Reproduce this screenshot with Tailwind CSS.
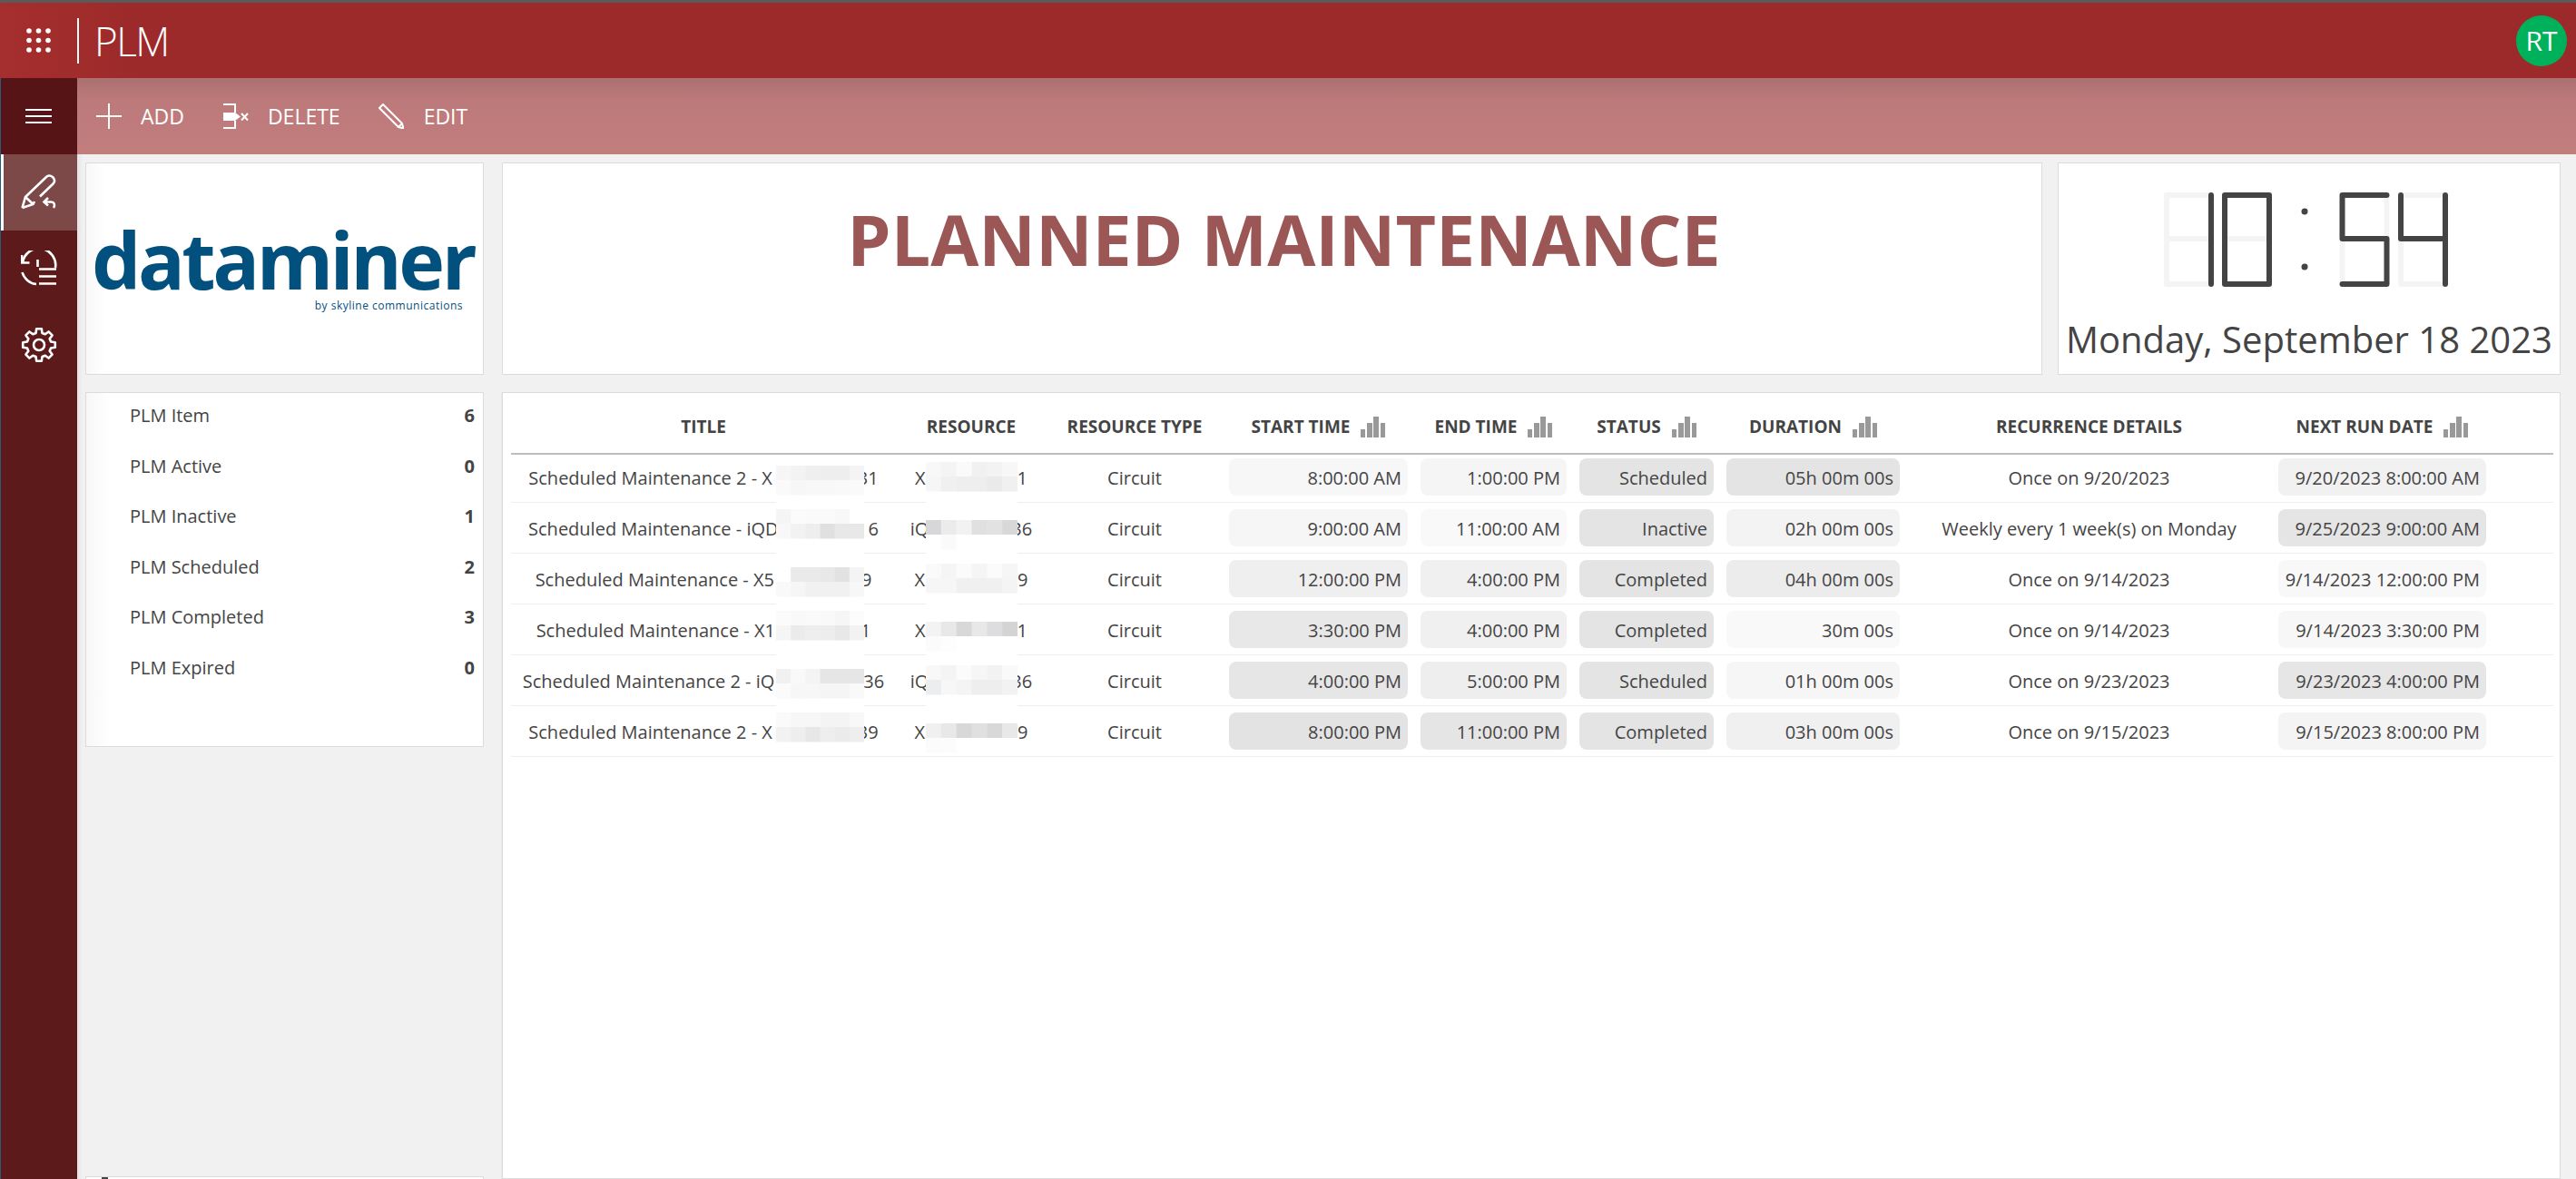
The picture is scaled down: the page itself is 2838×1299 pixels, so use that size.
<!DOCTYPE html>
<html lang="en">

<head>
    <meta charset="UTF-8">
    <title>PLM</title>
    <script src="https://cdn.jsdelivr.net/npm/@tailwindcss/browser@4"></script>
</head>

<body class="h-[1299px] overflow-hidden bg-[#f1f1f1] font-['Open_Sans',sans-serif] text-[#444444]">
    <svg class="hidden">
        <symbol id="bars" viewBox="0 0 27 23">
            <rect x="0" y="14" width="5" height="9" fill="#999999" />
            <rect x="7" y="7" width="6" height="16" fill="#999999" />
            <rect x="14" y="0" width="6" height="23" fill="#999999" />
            <rect x="22" y="7" width="5" height="16" fill="#999999" />
        </symbol>
        <symbol id="ghost" viewBox="0 0 55 104">
            <path d="M3 3H52V101H3ZM3 51H52" fill="none" stroke="#f4f4f4" stroke-width="6" stroke-linecap="round" />
        </symbol>
    </svg>

    <!-- top bar -->
    <div class="h-[3px] bg-[#5a5a5a]"></div>
    <header class="flex h-[83px] items-center bg-linear-to-r from-[#a52e2e] to-[#9c2a2a] to-[6%] pr-[10px] pl-[29px] text-white">
        <svg width="27" height="27" viewBox="0 0 27 27" fill="#ffffff">
            <circle cx="3" cy="3" r="2.8" /><circle cx="13.5" cy="3" r="2.8" /><circle cx="24" cy="3" r="2.8" />
            <circle cx="3" cy="13.5" r="2.8" /><circle cx="13.5" cy="13.5" r="2.8" /><circle cx="24" cy="13.5" r="2.8" />
            <circle cx="3" cy="24" r="2.8" /><circle cx="13.5" cy="24" r="2.8" /><circle cx="24" cy="24" r="2.8" />
        </svg>
        <div class="ml-[29px] h-[50px] w-[2px] bg-white"></div>
        <div class="ml-[17px] text-[44px] leading-none font-light tracking-[-1.5px]">PLM</div>
        <div class="ml-auto flex size-[56px] items-center justify-center rounded-full bg-[#00b15c] text-[30px] font-medium">RT</div>
    </header>

    <div class="flex h-[1213px]">
        <!-- side nav -->
        <nav class="w-[85px] shrink-0 border-l border-[#2d5a78] bg-[#5c1a1a]">
            <div class="flex h-[84px] items-center justify-center bg-[#561416] pr-[1px]">
                <div class="flex w-[29px] flex-col gap-[5px]">
                    <div class="h-[2px] bg-white"></div>
                    <div class="h-[2px] bg-white"></div>
                    <div class="h-[2px] bg-white"></div>
                </div>
            </div>
            <div class="flex h-[84px] items-center justify-center border-l-[3px] border-white bg-[#7d4848] pr-[3px]">
                <svg width="40" height="40" viewBox="0 0 40 40" fill="none" stroke="#ffffff" stroke-width="2.6">
                    <path d="M1.5 37L5 25L28 3C30 1 33 1 35.5 3.5C37.5 6 37.5 8.500 35.500 10.500L21 24.500M15 30L13.500 33L1.500 37M5 25L13.500 33" />
                    <path d="M30 26L25.500 30.500L30 34.500M25.500 30.500H33C37 30.500 38 34 36 37" />
                </svg>
            </div>
            <div class="flex h-[84px] items-center justify-center pr-[1px]">
                <svg width="40" height="40" viewBox="0 0 40 40" fill="none" stroke="#ffffff" stroke-width="2.6">
                    <path d="M1 5V13.500H9.500M2 13A18 18 0 0 1 38 19M1.500 24A18 18 0 0 0 17 37M18.500 10V18M20 20.500H39M20 28.500H39M20 36.500H39" />
                </svg>
            </div>
            <div class="flex h-[84px] items-center justify-center pr-[1px]">
                <svg width="40" height="40" viewBox="0 0 40 40" fill="none" stroke="#ffffff" stroke-width="2.6" stroke-linejoin="round">
                    <polygon points="16.51,6.96 17.18,2.22 22.82,2.22 23.49,6.96 26.75,8.31 30.58,5.44 34.56,9.42 31.69,13.25 33.04,16.51 37.78,17.18 37.78,22.82 33.04,23.49 31.69,26.75 34.56,30.58 30.58,34.56 26.75,31.69 23.49,33.04 22.82,37.78 17.18,37.78 16.51,33.04 13.25,31.69 9.42,34.56 5.44,30.58 8.31,26.75 6.96,23.49 2.22,22.82 2.22,17.18 6.96,16.51 8.31,13.25 5.44,9.42 9.42,5.44 13.25,8.31" />
                    <circle cx="20" cy="20" r="6" />
                </svg>
            </div>
        </nav>

        <div class="flex min-w-0 flex-1 flex-col">
            <!-- toolbar -->
            <div class="flex h-[84px] shrink-0 items-center gap-[42px] bg-linear-to-b from-[#ab7070] via-[#bd7a7a] via-30% to-[#c27d7d] pl-[21px] text-[23px] text-white">
                <div class="flex items-center gap-[21px]">
                    <svg width="28" height="28" viewBox="0 0 28 28" stroke="#ffffff" stroke-width="2">
                        <path d="M0 14H28M14 0V28" />
                    </svg>
                    <span>ADD</span>
                </div>
                <div class="flex items-center gap-[21px]">
                    <svg width="29" height="28" viewBox="0 0 29 28" fill="none" stroke="#ffffff" stroke-width="2">
                        <path d="M1 1H14V10M14 19V27H1M21 11L28 18.500M28 11L21 18.500" />
                        <path d="M1 10H14L20 14.500L14 19H1Z" fill="#ffffff" stroke="none" />
                    </svg>
                    <span>DELETE</span>
                </div>
                <div class="flex items-center gap-[22px]">
                    <svg width="28" height="28" viewBox="0 0 28 28" fill="none" stroke="#ffffff" stroke-width="2">
                        <path d="M1 5L5 1L26 22L27.500 27.500L22 26ZM22 26L26 22" />
                    </svg>
                    <span>EDIT</span>
                </div>
            </div>

            <!-- dashboard -->
            <main class="flex min-h-0 flex-1 flex-col bg-linear-to-r from-[#e4e4e4] to-[#f1f1f1] to-[6px] pt-[9px] pl-[9px]">
                <div class="flex h-[234px] shrink-0">
                    <div class="flex w-[439px] flex-col border border-[#dcdcdc] bg-linear-to-r from-[#f8f8f8] to-white to-[5%] pt-[65px]">
                        <div class="pl-[6px] text-[86px] leading-[82px] font-bold tracking-[-3.5px] text-[#02507e]">dataminer</div>
                        <div class="pr-[22px] text-right text-[12px] leading-[20px] tracking-[0.5px] text-[#02507e]">by skyline communications</div>
                    </div>
                    <div class="ml-[20px] w-[1697px] border border-[#dcdcdc] bg-white pt-[29px] pl-[26px] text-center text-[77px] leading-[110px] font-bold text-[#9b5656]">PLANNED MAINTENANCE</div>
                    <div class="ml-[17px] flex w-[554px] flex-col items-center border border-[#dcdcdc] bg-white pt-[32px]">
                        <svg class="-ml-[7px]" width="313" height="104" viewBox="0 0 313 104" fill="none" stroke="#444444" stroke-width="6" stroke-linecap="round" stroke-linejoin="round">
                            <use href="#ghost" x="0" y="0" width="55" height="104" />
                            <use href="#ghost" x="64" y="0" width="55" height="104" />
                            <use href="#ghost" x="193.500" y="0" width="55" height="104" />
                            <use href="#ghost" x="258" y="0" width="55" height="104" />
                            <path d="M52 3V101" />
                            <path d="M67 3H116V101H67Z" />
                            <circle cx="155" cy="21" r="3.500" fill="#444444" stroke="none" />
                            <circle cx="155" cy="82" r="3.500" fill="#444444" stroke="none" />
                            <path d="M245.500 3H196.500V51H245.500V101H196.500" />
                            <path d="M261 3V51H310M310 3V101" />
                        </svg>
                        <div class="mt-[28px] text-[40px] leading-[60px] whitespace-nowrap">Monday, September 18 2023</div>
                    </div>
                </div>

                <div class="mt-[19px] flex min-h-0 flex-1">
                    <!-- counters -->
                    <div class="flex w-[459px] shrink-0 flex-col border-r border-[#e9e9e9] pr-[9px]">
                        <div class="h-[391px] w-[439px] shrink-0 border border-[#dcdcdc] bg-linear-to-r from-[#f7f7f7] to-white to-[6%] pt-[5px] pr-[9px] pl-[48px] text-[20px]">
                            <div class="flex h-[55.5px] justify-between leading-[40px]"><span>PLM Item</span><b>6</b></div>
                            <div class="flex h-[55.5px] justify-between leading-[40px]"><span>PLM Active</span><b>0</b></div>
                            <div class="flex h-[55.5px] justify-between leading-[40px]"><span>PLM Inactive</span><b>1</b></div>
                            <div class="flex h-[55.5px] justify-between leading-[40px]"><span>PLM Scheduled</span><b>2</b></div>
                            <div class="flex h-[55.5px] justify-between leading-[40px]"><span>PLM Completed</span><b>3</b></div>
                            <div class="flex h-[55.5px] justify-between leading-[40px]"><span>PLM Expired</span><b>0</b></div>
                        </div>
                        <div class="mt-[473px] flex h-[10px] w-[439px] shrink-0 border border-[#dcdcdc] bg-white pl-[17px]">
                            <div class="h-full w-[7px] bg-[#444444]"></div>
                        </div>
                    </div>

                    <!-- maintenance table -->
                    <div class="relative mr-[17px] min-w-0 flex-1 border border-[#dcdcdc] bg-white pt-[9px] pl-[9px]">
                        <table class="w-[2250px] table-fixed border-separate border-spacing-0">
                            <colgroup>
                                <col class="w-[424px]">
                                <col class="w-[166px]">
                                <col class="w-[194px]">
                                <col class="w-[211px]">
                                <col class="w-[175px]">
                                <col class="w-[162px]">
                                <col class="w-[205px]">
                                <col class="w-[403px]">
                                <col class="w-[243px]">
                                <col class="w-[67px]">
                            </colgroup>
                            <thead class="text-[19px] font-bold">
                                <tr class="h-[59px] [&_th]:border-b-2 [&_th]:border-[#bdbdbd]">
                                    <th>TITLE</th>
                                    <th>RESOURCE</th>
                                    <th>RESOURCE TYPE</th>
                                    <th><div class="flex items-center justify-center gap-[12px]">START TIME <svg width="27" height="23"><use href="#bars" /></svg></div></th>
                                    <th><div class="flex items-center justify-center gap-[12px]">END TIME <svg width="27" height="23"><use href="#bars" /></svg></div></th>
                                    <th><div class="flex items-center justify-center gap-[12px]">STATUS <svg width="27" height="23"><use href="#bars" /></svg></div></th>
                                    <th><div class="flex items-center justify-center gap-[12px]">DURATION <svg width="27" height="23"><use href="#bars" /></svg></div></th>
                                    <th>RECURRENCE DETAILS</th>
                                    <th><div class="flex items-center justify-center gap-[12px]">NEXT RUN DATE <svg width="27" height="23"><use href="#bars" /></svg></div></th>
                                    <th></th>
                                </tr>
                            </thead>
                            <tbody id="rows" class="text-center text-[20px] whitespace-nowrap"></tbody>
                        </table>
                        <svg id="strip-title" class="absolute top-[72px] left-[301px] bg-white" width="97" height="322"></svg>
                        <svg id="strip-resource" class="absolute top-[72px] left-[466px] bg-white" width="101" height="325"></svg>
                    </div>
                </div>
            </main>
        </div>
    </div>
</body>

<script>
    // title, gap, tail, resource head, gap, tail, then the shaded cells
    const plans = [
        ['Scheduled Maintenance 2 - X', 94, '31', 'X', 101, '1', '8:00:00 AM', '#f7f7f7', '1:00:00 PM', '#f5f5f5', 'Scheduled', '05h 00m 00s', '#e4e4e4', 'Once on 9/20/2023', '9/20/2023 8:00:00 AM', '#f1f1f1'],
        ['Scheduled Maintenance - iQD', 99, '6', 'iQ', 91, '36', '9:00:00 AM', '#f6f6f6', '11:00:00 AM', '#f9f9f9', 'Inactive', '02h 00m 00s', '#f3f3f3', 'Weekly every 1 week(s) on Monday', '9/25/2023 9:00:00 AM', '#e5e5e5'],
        ['Scheduled Maintenance - X5', 96, '9', 'X', 102, '9', '12:00:00 PM', '#efefef', '4:00:00 PM', '#f0f0f0', 'Completed', '04h 00m 00s', '#ececec', 'Once on 9/14/2023', '9/14/2023 12:00:00 PM', '#f8f8f8'],
        ['Scheduled Maintenance - X1', 94, '1', 'X', 101, '1', '3:30:00 PM', '#e8e8e8', '4:00:00 PM', '#f0f0f0', 'Completed', '30m 00s', '#f9f9f9', 'Once on 9/14/2023', '9/14/2023 3:30:00 PM', '#f7f7f7'],
        ['Scheduled Maintenance 2 - iQ', 98, '36', 'iQ', 91, '36', '4:00:00 PM', '#e6e6e6', '5:00:00 PM', '#eeeeee', 'Scheduled', '01h 00m 00s', '#f6f6f6', 'Once on 9/23/2023', '9/23/2023 4:00:00 PM', '#e6e6e6'],
        ['Scheduled Maintenance 2 - X', 94, '39', 'X', 102, '9', '8:00:00 PM', '#e3e3e3', '11:00:00 PM', '#e5e5e5', 'Completed', '03h 00m 00s', '#f0f0f0', 'Once on 9/15/2023', '9/15/2023 8:00:00 PM', '#f4f4f4'],
    ];

    function pill(text, colour) {
        return `<td class="border-b border-[#eeeeee]"><div class="mx-[7px] h-[41px] rounded-[8px] pr-[7px] text-right leading-[44px]" style="background:${colour}">${text}</div></td>`;
    }

    function plain(html) {
        return `<td class="border-b border-[#eeeeee]"><div class="h-[41px] leading-[44px]">${html}</div></td>`;
    }

    function gap(width) {
        return `<span class="inline-block" style="width:${width}px"></span>`;
    }

    document.querySelector('#rows').innerHTML = plans.map((p, i) => `
        <tr class="${i === 0 ? 'h-[53px] [&_td]:pt-[4px]' : 'h-[56px] [&_td]:pt-[7px]'} [&_td]:align-top">
            ${plain(p[0] + gap(p[1]) + p[2])}
            ${plain(p[3] + gap(p[4]) + p[5])}
            ${plain('Circuit')}
            ${pill(p[6], p[7])}
            ${pill(p[8], p[9])}
            ${pill(p[10], '#e4e4e4')}
            ${pill(p[11], p[12])}
            ${plain(p[13])}
            ${pill(p[14], p[15])}
            <td class="border-b border-[#eeeeee]"></td>
        </tr>`).join('');

    // blurred-out ids: two lines of six squares per row
    function mosaic(id, cell, tops, blocks) {
        document.querySelector(id).innerHTML = blocks.map((row, r) =>
            row.map((shade, c) => {
                const x = (c % 6) * cell;
                const y = tops[r] + Math.floor(c / 6) * 16;
                return `<rect x="${x}" y="${y}" width="${cell + 0.5}" height="16.5" fill="${shade}" />`;
            }).join('')
        ).join('');
    }

    mosaic('#strip-title', 16.17, [8, 56, 120, 168, 232, 280], [
        ['#f6f6f6', '#f3f3f3', '#efefef', '#eeeeee', '#eeeeee', '#f4f4f4', '#fafafa', '#f7f7f7', '#f8f8f8', '#f8f8f8', '#f9f9f9', '#fafafa'],
        ['#f5f5f5', '#fbfbfb', '#fafafa', '#fafafa', '#f8f8f8', '#ffffff', '#f8f8f8', '#f2f2f2', '#eeeeee', '#e0e0e0', '#e8e8e8', '#e8e8e8'],
        ['#ffffff', '#eaeaea', '#eaeaea', '#e8e8e8', '#e2e2e2', '#f4f4f4', '#f9f9f9', '#f6f6f6', '#f1f1f1', '#f1f1f1', '#f1f1f1', '#f7f7f7'],
        ['#fbfbfb', '#f9f9f9', '#fafafa', '#f9f9f9', '#f6f6f6', '#fcfcfc', '#f5f5f5', '#ebebeb', '#eeeeee', '#ededed', '#e8e8e8', '#f2f2f2'],
        ['#f1f1f1', '#f9f9f9', '#f4f4f4', '#e6e6e6', '#e6e6e6', '#e6e6e6', '#fbfbfb', '#f7f7f7', '#f7f7f7', '#f5f5f5', '#f5f5f5', '#f9f9f9'],
        ['#fafafa', '#f7f7f7', '#f7f7f7', '#f4f4f4', '#f4f4f4', '#f8f8f8', '#f2f2f2', '#eeeeee', '#e7e7e7', '#eeeeee', '#ebebeb', '#eeeeee'],
    ]);

    mosaic('#strip-resource', 16.83, [4, 68, 116, 180, 228, 292], [
        ['#f8f8f8', '#f4f4f4', '#fafafa', '#f1f1f1', '#f3f3f3', '#f7f7f7', '#f6f6f6', '#f0f0f0', '#eeeeee', '#eeeeee', '#eaeaea', '#f0f0f0'],
        ['#d7d7d9', '#ebebeb', '#f2f2f2', '#e0e0e0', '#e2e2e2', '#d8d8d8', '#ffffff', '#fafafa', '#ffffff', '#ffffff', '#ffffff', '#ffffff'],
        ['#fafafa', '#f5f5f5', '#fbfbfb', '#f5f5f5', '#fbfbfb', '#f6f6f6', '#f6f6f6', '#f6f6f6', '#f0f0f0', '#f0f0f0', '#f0f0f0', '#f4f4f4'],
        ['#f3f3f3', '#e8e8e8', '#d8d8d8', '#e8e8e8', '#dddddf', '#d4d4d4', '#fbfbfb', '#fdfdfd', '#ffffff', '#ffffff', '#ffffff', '#ffffff'],
        ['#f8f8f8', '#f4f4f4', '#fbfbfb', '#f6f6f6', '#f2f2f2', '#f9f9f9', '#ecedef', '#f7f7f7', '#f4f4f4', '#eeeeee', '#eeeeee', '#f2f2f2'],
        ['#f0f0f0', '#e8e8e8', '#d8d8d8', '#e0e0e0', '#d8d8d8', '#e8e8e8', '#fbfbfb', '#fcfcfc', '#ffffff', '#ffffff', '#ffffff', '#ffffff'],
    ]);
</script>

</html>
